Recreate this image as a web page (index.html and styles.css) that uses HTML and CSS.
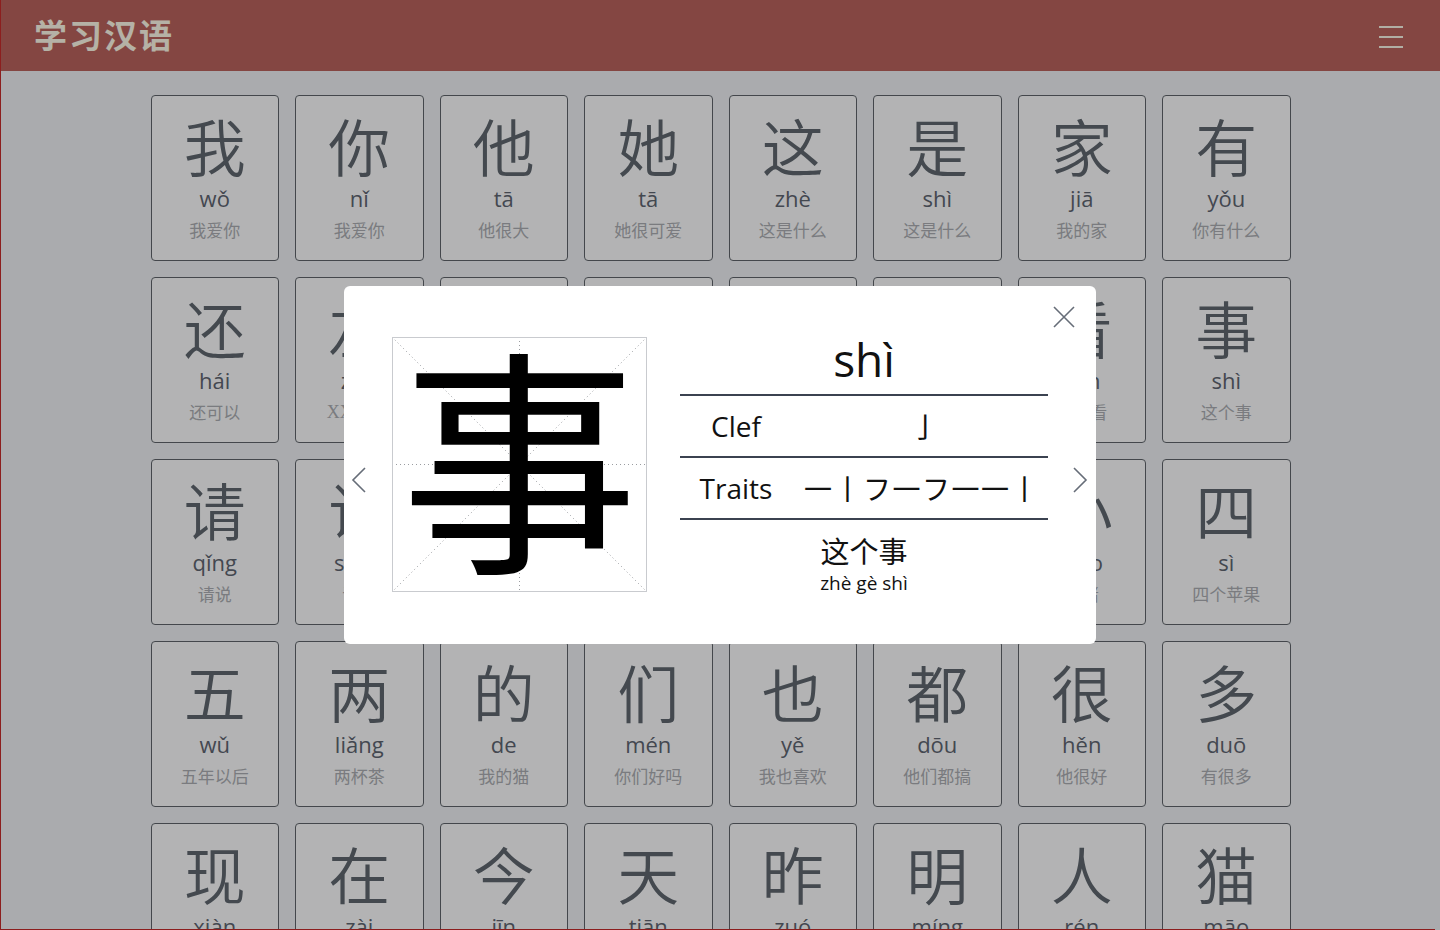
FILE: index.html
```html
<!DOCTYPE html>
<html lang="zh">
<head>
<meta charset="utf-8">
<title>学习汉语</title>
<link rel="stylesheet" href="styles.css">
</head>
<body>
<div class="edge"></div>
<header class="topbar">
  <span class="brand">学习汉语</span>
  <button class="burger" aria-label="menu"><span></span><span></span><span></span></button>
</header>
<main class="container">
  <div class="grid">
    <div class="card"><div class="hz">我</div><div class="py">wǒ</div><div class="ex">我爱你</div></div>
    <div class="card"><div class="hz">你</div><div class="py">nǐ</div><div class="ex">我爱你</div></div>
    <div class="card"><div class="hz">他</div><div class="py">tā</div><div class="ex">他很大</div></div>
    <div class="card"><div class="hz">她</div><div class="py">tā</div><div class="ex">她很可爱</div></div>
    <div class="card"><div class="hz">这</div><div class="py">zhè</div><div class="ex">这是什么</div></div>
    <div class="card"><div class="hz">是</div><div class="py">shì</div><div class="ex">这是什么</div></div>
    <div class="card"><div class="hz">家</div><div class="py">jiā</div><div class="ex">我的家</div></div>
    <div class="card"><div class="hz">有</div><div class="py">yǒu</div><div class="ex">你有什么</div></div>

    <div class="card"><div class="hz">还</div><div class="py">hái</div><div class="ex">还可以</div></div>
    <div class="card"><div class="hz">左</div><div class="py">zuǒ</div><div class="ex latin">XXXXX</div></div>
    <div class="card"><div class="hz">不</div><div class="py">bù</div><div class="ex">不是</div></div>
    <div class="card"><div class="hz">个</div><div class="py">gè</div><div class="ex">这个</div></div>
    <div class="card"><div class="hz">好</div><div class="py">hǎo</div><div class="ex">你好</div></div>
    <div class="card"><div class="hz">吗</div><div class="py">ma</div><div class="ex">好吗</div></div>
    <div class="card"><div class="hz">看</div><div class="py">kàn</div><div class="ex">看一看</div></div>
    <div class="card"><div class="hz">事</div><div class="py">shì</div><div class="ex">这个事</div></div>

    <div class="card"><div class="hz">请</div><div class="py">qǐng</div><div class="ex">请说</div></div>
    <div class="card"><div class="hz">说</div><div class="py">shuō</div><div class="ex">说话</div></div>
    <div class="card"><div class="hz">一</div><div class="py">yī</div><div class="ex">一个</div></div>
    <div class="card"><div class="hz">二</div><div class="py">èr</div><div class="ex">二十</div></div>
    <div class="card"><div class="hz">三</div><div class="py">sān</div><div class="ex">三个</div></div>
    <div class="card"><div class="hz">大</div><div class="py">dà</div><div class="ex">很大</div></div>
    <div class="card"><div class="hz">小</div><div class="py">xiǎo</div><div class="ex">小猪</div></div>
    <div class="card"><div class="hz">四</div><div class="py">sì</div><div class="ex">四个苹果</div></div>

    <div class="card"><div class="hz">五</div><div class="py">wǔ</div><div class="ex">五年以后</div></div>
    <div class="card"><div class="hz">两</div><div class="py">liǎng</div><div class="ex">两杯茶</div></div>
    <div class="card"><div class="hz">的</div><div class="py">de</div><div class="ex">我的猫</div></div>
    <div class="card"><div class="hz">们</div><div class="py">mén</div><div class="ex">你们好吗</div></div>
    <div class="card"><div class="hz">也</div><div class="py">yě</div><div class="ex">我也喜欢</div></div>
    <div class="card"><div class="hz">都</div><div class="py">dōu</div><div class="ex">他们都搞</div></div>
    <div class="card"><div class="hz">很</div><div class="py">hěn</div><div class="ex">他很好</div></div>
    <div class="card"><div class="hz">多</div><div class="py">duō</div><div class="ex">有很多</div></div>

    <div class="card"><div class="hz">现</div><div class="py">xiàn</div><div class="ex">现在</div></div>
    <div class="card"><div class="hz">在</div><div class="py">zài</div><div class="ex">现在</div></div>
    <div class="card"><div class="hz">今</div><div class="py">jīn</div><div class="ex">今天</div></div>
    <div class="card"><div class="hz">天</div><div class="py">tiān</div><div class="ex">今天</div></div>
    <div class="card"><div class="hz">昨</div><div class="py">zuó</div><div class="ex">昨天</div></div>
    <div class="card"><div class="hz">明</div><div class="py">míng</div><div class="ex">明天</div></div>
    <div class="card"><div class="hz">人</div><div class="py">rén</div><div class="ex">中国人</div></div>
    <div class="card"><div class="hz">猫</div><div class="py">māo</div><div class="ex">我的猫</div></div>
  </div>
</main>

<div class="backdrop"></div>
<div class="modal-wrap">
  <div class="modal">
    <button class="close" aria-label="close">
      <svg width="24" height="24" viewBox="0 0 24 24"><path d="M2 2 L22 22 M22 2 L2 22" stroke="currentColor" stroke-width="1.6" fill="none"/></svg>
    </button>
    <button class="nav prev" aria-label="previous">
      <svg width="16" height="26" viewBox="0 0 16 26"><path d="M14 1 L2 13 L14 25" stroke="currentColor" stroke-width="1.6" fill="none"/></svg>
    </button>
    <button class="nav next" aria-label="next">
      <svg width="16" height="26" viewBox="0 0 16 26"><path d="M2 1 L14 13 L2 25" stroke="currentColor" stroke-width="1.6" fill="none"/></svg>
    </button>
    <div class="modal-body">
      <div class="hanzi-box">
        <svg class="guides" width="255" height="255" viewBox="0 0 255 255">
          <g stroke="#9a9ca0" stroke-width="1" stroke-dasharray="1 3" fill="none">
            <line x1="0" y1="0" x2="255" y2="255"/>
            <line x1="255" y1="0" x2="0" y2="255"/>
            <line x1="127.5" y1="0" x2="127.5" y2="255"/>
            <line x1="0" y1="127.5" x2="255" y2="127.5"/>
          </g>
        </svg>
        <span class="big-hz">事</span>
      </div>
      <div class="info">
        <div class="reading">shì</div>
        <div class="row"><span class="label">Clef</span><span class="value">亅</span></div>
        <div class="row"><span class="label">Traits</span><span class="value strokes">一丨フ一フ一一丨</span></div>
        <div class="example">
          <div class="ex-hz">这个事</div>
          <div class="ex-py">zhè gè shì</div>
        </div>
      </div>
    </div>
  </div>
</div>
</body>
</html>
```

FILE: styles.css
```css
* { box-sizing: border-box; }

html, body {
  margin: 0;
  padding: 0;
}

body {
  background: #eceef1;
  font-family: "Open Sans", "Noto Sans CJK SC", sans-serif;
  border-left: 1px solid #c22a2a;
  min-height: 100vh;
  overflow: hidden;
}

.edge {
  position: fixed;
  left: 0;
  bottom: 0;
  width: 1435px;
  height: 1px;
  background: #c22a2a;
}

.topbar {
  height: 71px;
  background: #b7615c;
  display: flex;
  align-items: center;
  justify-content: space-between;
  padding: 0 36px 0 33px;
}

.brand {
  font-family: "Noto Sans CJK SC", sans-serif;
  font-weight: 700;
  font-size: 33px;
  letter-spacing: 2px;
  color: #fbf7e7;
  line-height: 1;
  margin-top: -2px;
}

.burger {
  width: 26px;
  height: 22px;
  padding: 0 1px;
  border: 0;
  background: none;
  display: flex;
  flex-direction: column;
  justify-content: space-between;
  margin-top: 2px;
}

.burger span {
  display: block;
  height: 2px;
  width: 24px;
  background: #f6f2e3;
}

.container {
  width: 1140px;
  margin: 24px auto 0;
}

.grid {
  display: grid;
  grid-template-columns: repeat(8, 1fr);
  gap: 16px;
}

.card {
  height: 166px;
  background: #f8f9fa;
  border: 1px solid #5f636a;
  border-radius: 4px;
  display: flex;
  flex-direction: column;
  align-items: center;
  padding-top: 11px;
}

.hz {
  font-family: "Noto Sans CJK SC", sans-serif;
  font-size: 62px;
  line-height: 76px;
  color: #5f666e;
  font-weight: 350;
}

.py {
  font-size: 22px;
  line-height: 28px;
  color: #5e6470;
  margin-top: 1px;
}

.ex {
  font-family: "Noto Sans CJK SC", sans-serif;
  font-size: 17px;
  line-height: 24px;
  margin-top: 6px;
  color: #a9abb0;
}

.ex.latin {
  font-family: "Liberation Serif", serif;
  font-size: 18px;
}

.backdrop {
  position: fixed;
  inset: 0;
  background: rgba(0, 0, 0, 0.28);
}

.modal-wrap {
  position: fixed;
  inset: 0;
  display: flex;
  align-items: center;
  justify-content: center;
}

.modal {
  position: relative;
  width: 752px;
  height: 358px;
  background: #fff;
  border-radius: 6px;
}

.modal button {
  border: 0;
  background: none;
  padding: 0;
  color: #666d78;
  display: block;
}

.close {
  position: absolute;
  top: 19px;
  right: 20px;
  width: 24px;
  height: 24px;
}

.nav {
  position: absolute;
  top: 181px;
  width: 16px;
  height: 26px;
}

.prev { left: 7px; }
.next { right: 8px; }

.modal-body {
  display: flex;
  gap: 33px;
  padding: 51px 48px;
}

.hanzi-box {
  position: relative;
  width: 255px;
  height: 255px;
  flex: none;
  border: 1px solid #c9cbcf;
  display: flex;
  align-items: center;
  justify-content: center;
  overflow: hidden;
}

.guides {
  position: absolute;
  inset: -1px;
}

.big-hz {
  position: relative;
  font-family: "Noto Sans CJK SC", sans-serif;
  font-size: 238px;
  line-height: 238px;
  color: #000;
  margin-top: -27px;
}

.info {
  width: 368px;
  display: flex;
  flex-direction: column;
  color: #111;
}

.reading {
  height: 59px;
  border-bottom: 2px solid #3b4250;
  text-align: center;
  font-size: 46px;
  line-height: 44px;
}

.row {
  height: 62px;
  border-bottom: 2px solid #3b4250;
  display: grid;
  grid-template-columns: 112px 1fr;
  align-items: center;
  font-size: 28px;
}

.label {
  text-align: center;
}

.value {
  text-align: center;
  font-family: "Noto Sans CJK SC", sans-serif;
  padding-left: 10px;
}

.strokes {
  font-size: 28px;
  letter-spacing: 1.5px;
  padding-left: 4px;
}

.example {
  text-align: center;
  padding-top: 13px;
}

.ex-hz {
  font-family: "Noto Sans CJK SC", sans-serif;
  font-size: 29px;
  line-height: 34px;
}

.ex-py {
  font-size: 19px;
  line-height: 24px;
  margin-top: 4px;
}
```
